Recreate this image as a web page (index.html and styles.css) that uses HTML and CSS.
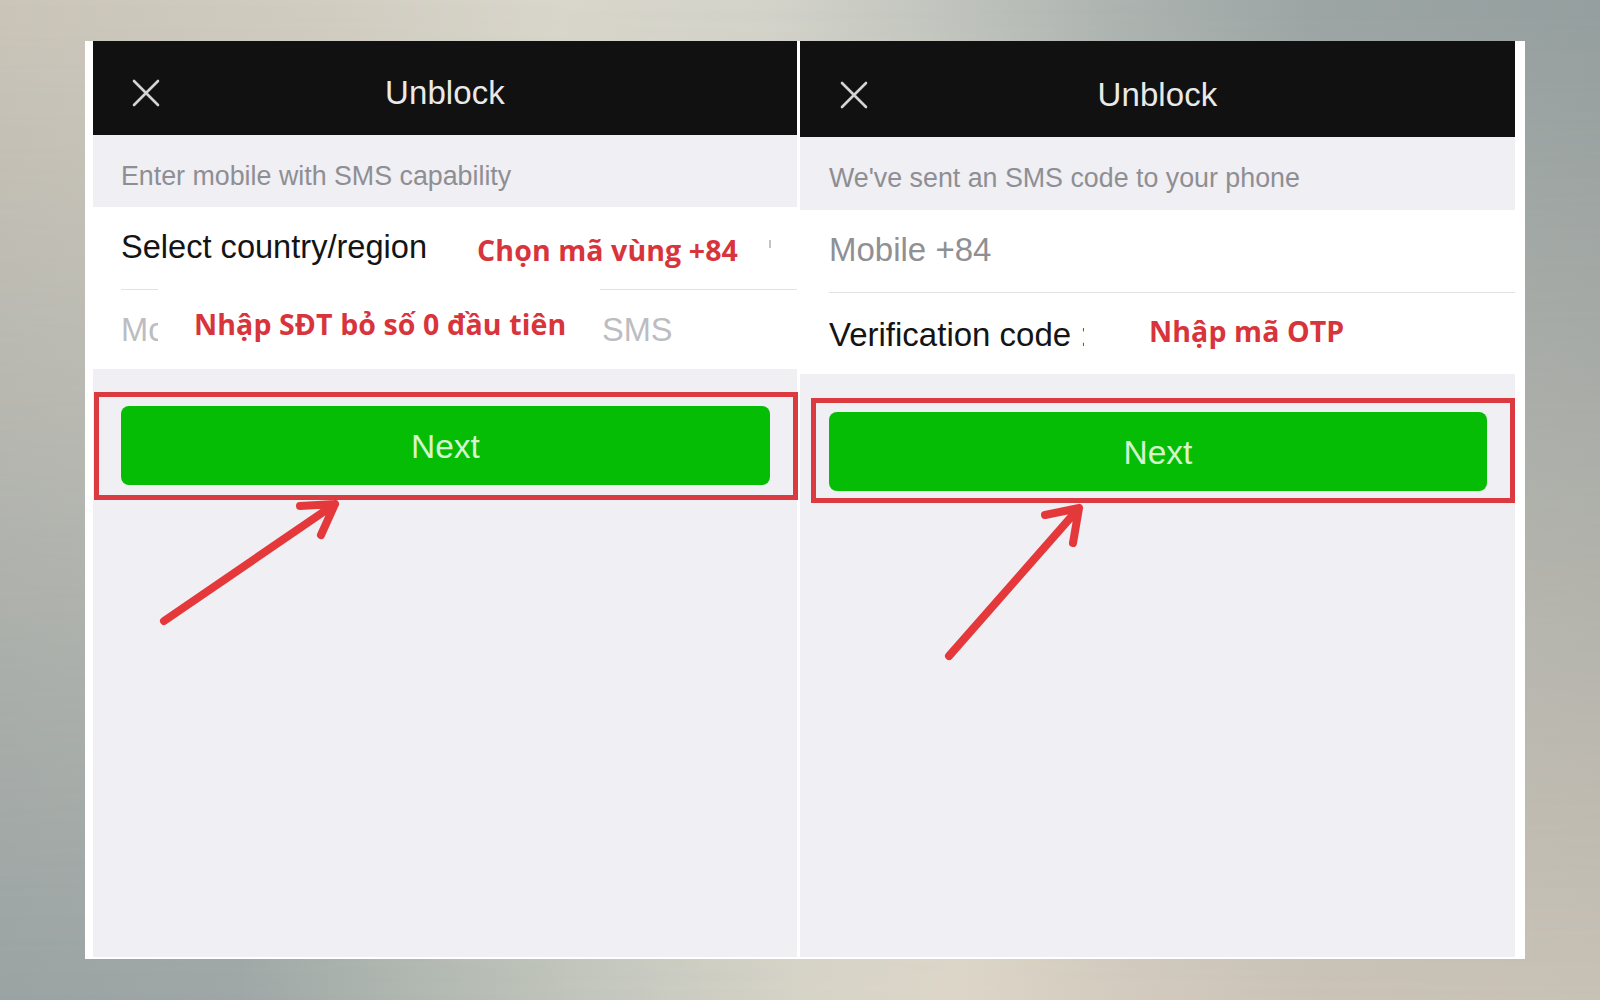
FILE: index.html
```html
<!DOCTYPE html>
<html lang="vi">
<head>
<meta charset="utf-8">
<title>Unblock</title>
<link rel="stylesheet" href="styles.css">
</head>
<body>
<div class="stage">
  <div class="bg"></div>
  <div class="frame">
    <section class="panel panel-left">
      <header class="nav nav-left">
        <svg class="close" viewBox="0 0 28 28" width="28" height="28"><path d="M2 2 L26 26 M26 2 L2 26" stroke="#d4d4d4" stroke-width="2.6" stroke-linecap="round" fill="none"/></svg>
        <h1 class="title">Unblock</h1>
        <span></span>
      </header>
      <div class="hint hint-left">Enter mobile with SMS capability</div>
      <div class="group">
        <div class="cell cell-top-left">
          <span class="label">Select country/region</span>
          <span class="note note-country">Chọn mã vùng +84</span>
          <span class="tick"></span>
        </div>
        <div class="cell cell-sep cell-phone">
          <span class="label placeholder clip-mobile">Mobile</span>
          <span class="note note-phone">Nhập SĐT bỏ số 0 đầu tiên</span>
          <span class="placeholder sms">SMS</span>
        </div>
      </div>
      <div class="hl hl-left"><button class="next">Next</button></div>
      <svg class="arrow arrow-left" width="200" height="140" viewBox="0 0 200 140"><path d="M14 121 L185 4 M150 6 L185 4 L171 35" stroke="#e5383b" stroke-width="8" stroke-linecap="round" stroke-linejoin="round" fill="none"/></svg>
    </section>
    <section class="panel panel-right">
      <header class="nav nav-right">
        <svg class="close" viewBox="0 0 28 28" width="28" height="28"><path d="M2 2 L26 26 M26 2 L2 26" stroke="#d4d4d4" stroke-width="2.6" stroke-linecap="round" fill="none"/></svg>
        <h1 class="title">Unblock</h1>
        <span></span>
      </header>
      <div class="hint hint-right">We've sent an SMS code to your phone</div>
      <div class="group">
        <div class="cell cell-top-right">
          <span class="label muted">Mobile +84</span>
        </div>
        <div class="cell cell-sep cell-code">
          <span class="label clip-code">Verification code :</span>
          <span class="note note-otp">Nhập mã OTP</span>
        </div>
      </div>
      <div class="hl hl-right"><button class="next">Next</button></div>
      <svg class="arrow arrow-right" width="170" height="170" viewBox="0 0 170 170"><path d="M19 153 L149 5 M115 12 L149 5 L143 40" stroke="#e5383b" stroke-width="8" stroke-linecap="round" stroke-linejoin="round" fill="none"/></svg>
    </section>
  </div>
</div>
</body>
</html>
```

FILE: styles.css
```css
* { box-sizing: border-box; }

html, body {
  margin: 0;
  padding: 0;
}

body {
  width: 1600px;
  height: 1000px;
  overflow: hidden;
  font-family: "Liberation Sans", Arial, sans-serif;
  background: linear-gradient(to right, #cbc5b9 0%, #d1cdc1 20%, #d9d6cb 35%, #d3d3ca 48%, #c3c6bf 58%, #acb3b0 70%, #9ca5a4 82%, #959f9f 100%);
}

.stage {
  display: grid;
  width: 1600px;
  height: 1000px;
}

.stage > * {
  grid-area: 1 / 1;
}

.bg {
  background: linear-gradient(to right, #9aa3a3 0%, #9ea7a6 15%, #b3bab2 28%, #c4c7be 38%, #d6d3c7 50%, #ddd6c8 60%, #d3cbbe 70%, #cbc3b7 82%, #c8c1b5 100%);
  -webkit-mask-image: linear-gradient(to bottom, transparent 0%, #000 100%);
  mask-image: linear-gradient(to bottom, transparent 0%, #000 100%);
}

.frame {
  isolation: isolate;
  margin: 41px 75px 41px 85px;
  background: #ffffff;
  display: flex;
  padding: 0 10px 2px 8px;
  gap: 3px;
}

.panel {
  background: #efeff4;
  display: flex;
  flex-direction: column;
}

.panel-left { width: 704px; }
.panel-right { flex: 1; }

/* nav bar */
.nav {
  background: #111111;
  display: grid;
  grid-template-columns: 1fr auto 1fr;
  align-items: center;
}

.nav-left { height: 94px; padding-top: 10px; }
.nav-left .close { margin-left: 39px; }
.nav-right { height: 96px; padding-top: 12px; }
.nav-right .close { margin-left: 40px; }

.close { display: block; }

.title {
  margin: 0;
  font-weight: 400;
  font-size: 33px;
  color: #e9e9e9;
  letter-spacing: 0.1px;
}

/* hint band */
.hint {
  display: flex;
  align-items: center;
  font-size: 26.8px;
  color: #8e8e93;
  white-space: nowrap;
}

.hint-left { height: 72px; padding: 11px 0 0 28px; }
.hint-right { height: 73px; padding: 10px 0 0 29px; }

/* rows */
.group {
  background: #ffffff;
}

.cell {
  display: flex;
  align-items: center;
  white-space: nowrap;
  font-size: 32.6px;
  color: #141414;
}

.cell-sep {
  border-top: 1.5px solid #e2e2e6;
}

.cell-top-left { height: 82px; padding: 0 0 2px 28px; }
.cell-phone { height: 80px; margin-left: 28px; }
.cell-top-right { height: 82px; padding: 0 0 2px 29px; }
.cell-code { height: 82px; margin-left: 29px; padding-top: 3px; }

.placeholder { color: #bcbcc1; }
.muted { color: #8f8f94; font-size: 33px; }

.clip-mobile {
  width: 37px;
  overflow: hidden;
}

.clip-code {
  width: 255px;
  overflow: hidden;
  font-size: 33px;
}

.sms { margin-left: 2px; }

/* red annotations */
.note {
  font-family: "Open Sans", "Noto Sans", sans-serif;
  font-weight: 700;
  color: #d8343c;
  font-size: 28.5px;
  letter-spacing: 0.1px;
  background: #ffffff;
  display: flex;
  align-items: center;
}

.note-country {
  margin-left: 50px;
  margin-top: 6px;
}

.note-phone {
  align-self: stretch;
  width: 442px;
  margin-top: -8px;
  padding: 0 0 4px 36px;
}

.note-otp {
  margin-left: 0;
  padding-left: 65px;
  margin-bottom: 8px;
}

.tick {
  width: 2px;
  height: 8px;
  background: #c4c4c8;
  margin-left: 31px;
  margin-bottom: 6px;
}

/* highlighted button */
.hl {
  border: 5px solid #dc3a41;
}

.hl-left {
  margin: 23px -1px 0 1px;
  padding: 9px 23px 10px 22px;
}

.hl-right {
  margin: 24px 0 0 11px;
  padding: 9px 23px 7px 13px;
}

.next {
  display: block;
  width: 100%;
  height: 79px;
  border: none;
  border-radius: 8px;
  background: #06bd06;
  color: #d4f5cd;
  font-family: "Liberation Sans", Arial, sans-serif;
  font-size: 33.5px;
  padding: 3px 0 0 0;
}

.arrow { display: block; flex: none; }
.arrow-left { margin-left: 57px; }
.arrow-right { margin-left: 130px; }
```
